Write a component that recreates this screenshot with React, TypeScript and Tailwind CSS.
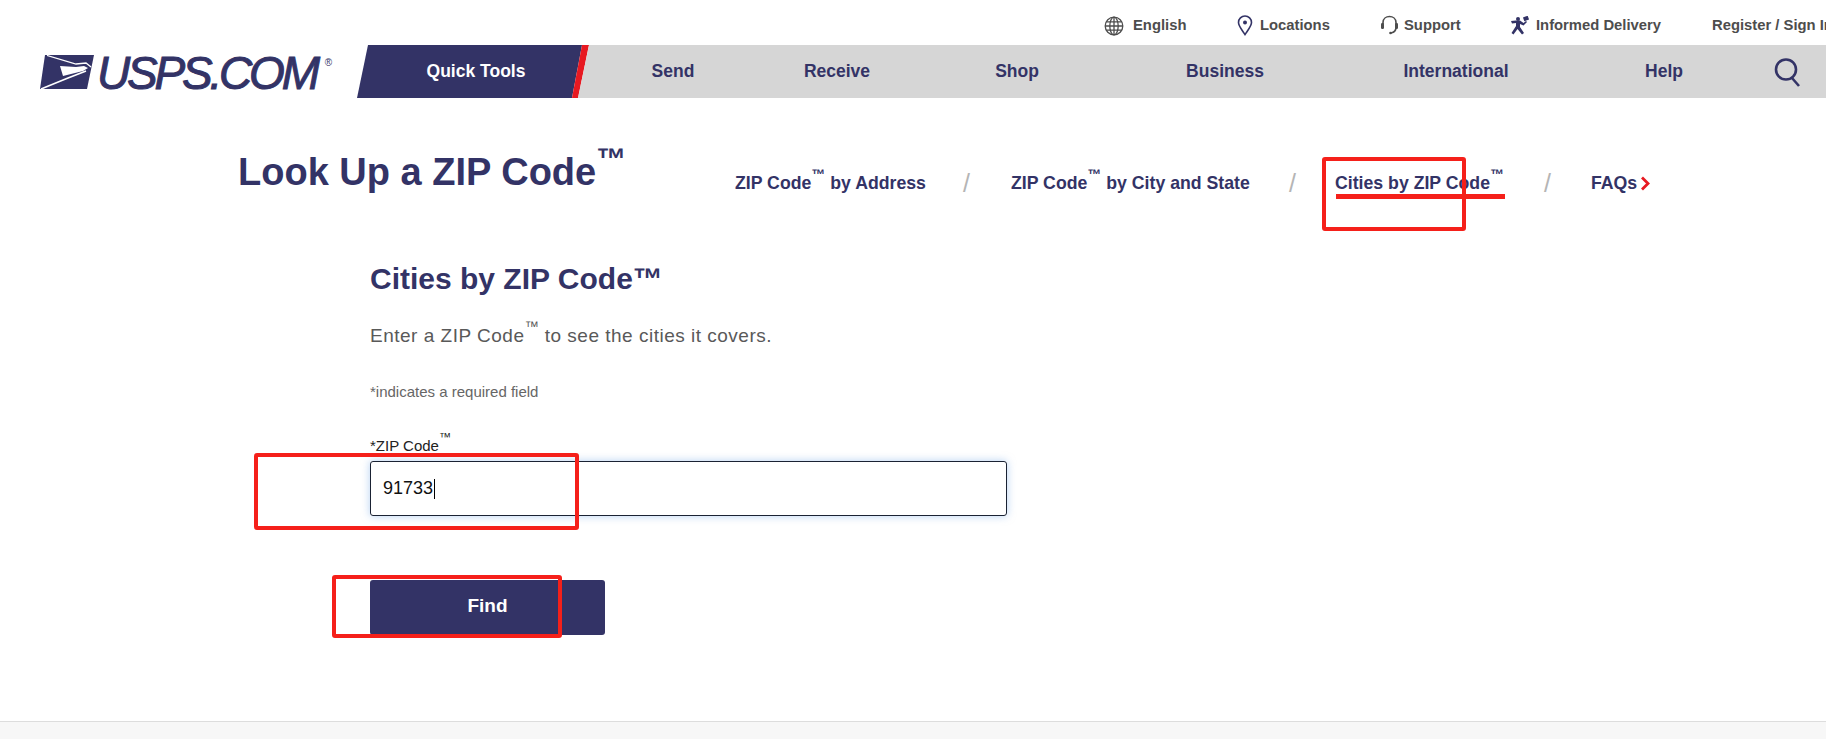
import React from "react";

const Tm = ({ cls }: { cls: string }) => <sup className={cls}>™</sup>;

function Eagle() {
  return (
    <svg width="54" height="34" viewBox="0 0 54 34" className="shrink-0">
      <polygon points="5,0 54,0 47,34 0,34" fill="#333366" />
      <path d="M7 0.5 L36 9 L46 8 L51 12" stroke="#fff" strokeWidth="1.3" fill="none" />
      <path d="M20 11 L36 12 L44 11 L48 13 L43 16 L23 21 Z" fill="#fff" />
      <path d="M1 34 L28 23 L46 16" stroke="#fff" strokeWidth="1.6" fill="none" />
    </svg>
  );
}

function Runner() {
  return (
    <svg width="20" height="19" viewBox="0 0 20 19" fill="#333366">
      <circle cx="8" cy="3" r="2" />
      <path d="M1 5 L6 4.5 L10 4.5 L13.5 7 L16 5 L17 6 L13.5 9.5 L10 8 L10 11 L14 17 L12 18.5 L7.5 13 L3.5 18.5 L1.5 17 L6 10 L6 7 L2 7.5 Z" />
      <rect x="13.5" y="0.5" width="5" height="4" transform="rotate(-20 16 2.5)" />
    </svg>
  );
}

function Headset() {
  return (
    <svg width="19" height="21" viewBox="0 0 19 21" fill="none" stroke="#4d4d4d">
      <path d="M3 9 V7.5 C3 -0.5 16 -0.5 16 7.5 V12 C16 16 14 17.5 11 18" strokeWidth="1.6" />
      <rect x="1" y="8" width="3" height="6" rx="1.2" fill="#4d4d4d" strokeWidth="0" />
      <rect x="15" y="8" width="3" height="6" rx="1.2" fill="#4d4d4d" strokeWidth="0" />
      <circle cx="10.5" cy="18" r="1.3" fill="#4d4d4d" strokeWidth="0" />
    </svg>
  );
}

const utility = [
  { label: "English", w: "w-[133px]", gap: "gap-[9px]", icon: (
    <svg width="20" height="20" viewBox="0 0 20 20" fill="none" stroke="#4d4d4d" strokeWidth="1.3">
      <circle cx="10" cy="10" r="8.8" /><ellipse cx="10" cy="10" rx="4.2" ry="8.8" /><path d="M10 1.2 V18.8 M1.2 10 H18.8 M2.6 5.8 H17.4 M2.6 14.2 H17.4" />
    </svg>) },
  { label: "Locations", w: "w-[143px]", gap: "gap-[7px]", icon: (
    <svg width="16" height="21" viewBox="0 0 16 21" fill="none" stroke="#333366" strokeWidth="1.6">
      <path d="M8 19.5 C5 15 1.5 11 1.5 7.5 A6.5 6.5 0 0 1 14.5 7.5 C14.5 11 11 15 8 19.5 Z" /><circle cx="8" cy="7.5" r="2" fill="#333366" strokeWidth="0" />
    </svg>) },
  { label: "Support", w: "w-[130px]", gap: "gap-[5px]", icon: <Headset /> },
  { label: "Informed Delivery", w: "w-[202px]", gap: "gap-[6px]", icon: <Runner /> },
];

const nav = [
  { label: "Send", w: "w-[168px]" },
  { label: "Receive", w: "w-[160px]" },
  { label: "Shop", w: "w-[200px]" },
  { label: "Business", w: "w-[216px]" },
  { label: "International", w: "w-[246px]" },
  { label: "Help", w: "w-[170px]" },
];

export default function App() {
  return (
    <div className="relative flex h-[739px] w-[1826px] flex-col overflow-hidden bg-white font-['Liberation_Sans',Arial,sans-serif]">
      <div className="flex h-[45px] items-center pl-[1104px] pt-[6px] text-[14.8px] font-bold whitespace-nowrap text-[#4d4d4d]">
        {utility.map((u) => (
          <div key={u.label} className={`flex shrink-0 items-center ${u.w} ${u.gap}`}>
            {u.icon}
            <span>{u.label}</span>
          </div>
        ))}
        <span className="-mt-[1px] shrink-0">Register / Sign In</span>
      </div>

      <div className="flex h-[53px]">
        <div className="flex w-[357px] shrink-0 items-center pt-[1px] pl-[40px]">
          <Eagle />
          <span className="mt-[2px] ml-[3px] text-[46px] leading-none tracking-[-3.2px] text-[#333366] italic [-webkit-text-stroke:1px_#333366]">USPS.COM</span>
          <span className="mb-[20px] ml-[8px] text-[10px] text-[#333366]">®</span>
        </div>
        <div className="relative flex h-[53px] w-[232px] shrink-0 items-center justify-center pl-[6px] text-[17.5px] font-bold text-white">
          <svg width="232" height="53" viewBox="0 0 232 53" className="absolute inset-0">
            <polygon points="11,0 225,0 215,53 0,53" fill="#333366" />
            <polygon points="225,0 232,0 221,53 215,53" fill="#e71921" />
            <polygon points="232,0 232,53 221,53" fill="#d6d6d6" />
          </svg>
          <span className="relative">Quick Tools</span>
        </div>
        <div className="flex flex-1 items-center bg-[#d6d6d6] text-[17.5px] font-bold text-[#333366]">
          {nav.map((n) => (
            <div key={n.label} className={`shrink-0 text-center ${n.w}`}>{n.label}</div>
          ))}
          <svg width="30" height="30" viewBox="0 0 30 30" fill="none" stroke="#333366" strokeWidth="2.6" className="ml-[24px]">
            <circle cx="13" cy="12.5" r="10" />
            <path d="M19 21 L26 29" />
          </svg>
        </div>
      </div>

      <div className="flex h-[122px] items-start pl-[238px]">
        <h1 className="mt-[50px] w-[497px] shrink-0 text-[38px] leading-[48px] font-bold text-[#333366]">
          Look Up a ZIP Code<Tm cls="text-[30px] align-[1px] leading-none" />
        </h1>
        <div className="mt-[73px] flex items-center text-[17.7px] leading-[24px] font-bold whitespace-nowrap text-[#333366]">
          <span className="w-[190px] shrink-0">ZIP Code<Tm cls="text-[14px] align-[3px] leading-none" /> by Address</span>
          <span className="ml-[38px] w-[48px] shrink-0 text-[25px] font-normal text-[#b5b5b5]">/</span>
          <span className="w-[239px] shrink-0">ZIP Code<Tm cls="text-[14px] align-[3px] leading-none" /> by City and State</span>
          <span className="ml-[39px] w-[46px] shrink-0 text-[25px] font-normal text-[#b5b5b5]">/</span>
          <span className="w-[169px] shrink-0">Cities by ZIP Code<Tm cls="text-[14px] align-[3px] leading-none" /></span>
          <span className="ml-[40px] w-[47px] shrink-0 text-[25px] font-normal text-[#b5b5b5]">/</span>
          <span>FAQs</span>
          <svg width="11" height="15" viewBox="0 0 11 15" fill="none" stroke="#e71921" strokeWidth="2.8" className="ml-[3px]">
            <path d="M2 1.5 L8 7.5 L2 13.5" />
          </svg>
        </div>
      </div>

      <div className="flex flex-1 flex-col pl-[370px]">
        <h2 className="mt-[41px] text-[30px] leading-[36px] font-bold text-[#333366]">Cities by ZIP Code™</h2>
        <p className="mt-[25px] text-[19px] leading-[28px] tracking-[0.5px] text-[#595959]">
          Enter a ZIP Code<Tm cls="text-[14px] align-[4px] leading-none" /> to see the cities it covers.
        </p>
        <p className="mt-[32px] text-[15px] leading-[20px] text-[#666666]">*indicates a required field</p>
        <label className="mt-[34px] h-[25px] text-[15px] leading-[20px] text-[#222222]">
          *ZIP Code<Tm cls="text-[12px] align-[4px] leading-none" />
        </label>
        <div className="flex h-[55px] w-[637px] items-center rounded-[3px] border border-[#1a2233] pl-[12px] text-[18px] text-[#111111] shadow-[0_0_9px_rgba(120,170,230,0.55)]">
          <span>91733</span>
          <span className="ml-[1px] h-[20px] w-px bg-black" />
        </div>
        <button className="mt-[64px] h-[55px] w-[235px] rounded-[3px] bg-[#333366] pb-[2px] text-[19px] font-bold text-white">Find</button>
      </div>

      <div className="h-[18px] border-t border-[#dddddd] bg-[#f7f7f7]" />

      <div className="absolute top-[194px] left-[1336px] h-[5px] w-[169px] bg-[#f5201a]" />
      <div className="absolute top-[157px] left-[1322px] h-[74px] w-[144px] rounded-[3px] border-[4px] border-[#f5201a]" />
      <div className="absolute top-[453px] left-[254px] h-[77px] w-[325px] rounded-[3px] border-[4px] border-[#f5201a]" />
      <div className="absolute top-[575px] left-[332px] h-[63px] w-[230px] rounded-[3px] border-[4px] border-[#f5201a]" />
    </div>
  );
}
